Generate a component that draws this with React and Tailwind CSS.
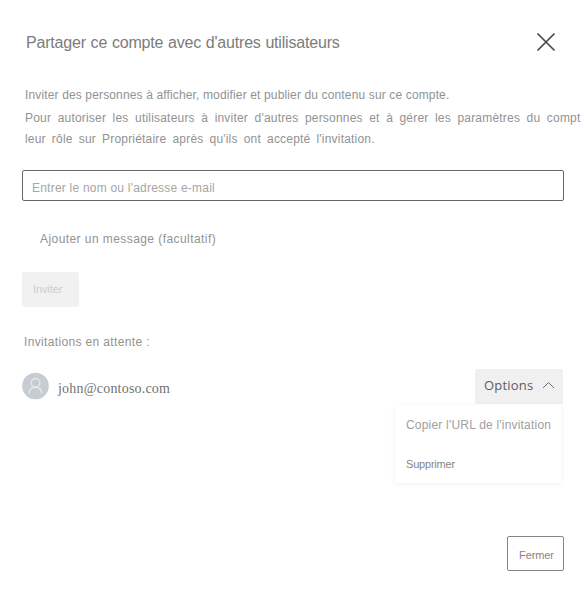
import React from "react";

function CloseIcon() {
  return (
    <svg width="20" height="20" viewBox="0 0 20 20" fill="none" stroke="#484848" strokeWidth="1.7">
      <path d="M1.5 1.5 18.5 18.5M18.5 1.5 1.5 18.5" />
    </svg>
  );
}

function Avatar() {
  return (
    <svg width="28" height="28" viewBox="0 0 28 28" fill="none">
      <circle cx="13.5" cy="14" r="13.3" fill="#c6ccd1" />
      <g stroke="#e2e7ea" strokeWidth="1.5" strokeLinecap="round">
        <circle cx="13.5" cy="10.8" r="4.3" />
        <path d="M7.300 20.800c.4-3.600 2.800-5.500 6.200-5.500s5.800 1.900 6.200 5.500" />
      </g>
    </svg>
  );
}

function OptionsMenu() {
  return (
    <div className="relative">
      <button className="flex h-[35px] w-[88px] items-center rounded-t-[2px] bg-[#f0f0f0] pl-[9px] font-['Open_Sans',sans-serif] text-[13px] tracking-[0.2px] text-[#5c5c5c]">
        <span className="mt-[-3px] w-[58px] text-left leading-4 whitespace-nowrap">Options</span>
        <svg className="mt-[-4px]" width="13" height="8" viewBox="0 0 13 8" fill="none" stroke="#707070" strokeWidth="1">
          <path d="M1 7 6.500 1.500 12 7" />
        </svg>
      </button>
      <div className="absolute top-[36px] right-[2px] flex h-[78px] w-[166px] flex-col bg-white pt-[12px] pl-[11px] shadow-[0_1px_6px_rgba(0,0,0,0.06)]">
        <span className="text-[12px] leading-4 tracking-[0.2px] whitespace-nowrap text-[#a0a0a0]">Copier l'URL de l'invitation</span>
        <span className="mt-[23px] text-[11px] leading-4 tracking-[-0.2px] whitespace-nowrap text-[#858585]">Supprimer</span>
      </div>
    </div>
  );
}

export default function App() {
  return (
    <main className="flex h-[594px] w-[582px] flex-col overflow-hidden bg-white font-['Liberation_Sans',Arial,sans-serif] text-[12px] text-[#929292]">
      <header className="flex h-[64px] items-start justify-between pt-[32px] pr-[26px] pl-[26px]">
        <h1 className="pt-px text-[16px] leading-5 tracking-[-0.19px] [word-spacing:0.5px] whitespace-nowrap text-[#7c7c7c]">Partager ce compte avec d'autres utilisateurs</h1>
        <button aria-label="Fermer"><CloseIcon /></button>
      </header>
      <section className="mt-[23px] pl-[25px] whitespace-nowrap">
        <p className="h-[23px] leading-4 tracking-[0.14px]">Inviter des personnes à afficher, modifier et publier du contenu sur ce compte.</p>
        <p className="h-[21px] leading-4 tracking-[0.2px] [word-spacing:2.95px]">Pour autoriser les utilisateurs à inviter d'autres personnes et à gérer les paramètres du compt</p>
        <p className="h-[16px] leading-4 tracking-[0.2px] [word-spacing:2.5px]">leur rôle sur Propriétaire après qu'ils ont accepté l'invitation.</p>
      </section>
      <div className="mt-[23px] ml-[22px] flex h-[31px] w-[542px] items-center rounded-[2px] border border-[#666] pt-[5px] pl-[9px] leading-4 tracking-[0.22px] text-[#a5a5a5]">
        Entrer le nom ou l'adresse e-mail
      </div>
      <p className="mt-[30px] ml-[40px] h-4 leading-4 tracking-[0.43px]">Ajouter un message (facultatif)</p>
      <button className="mt-[25px] ml-[22px] h-[35px] w-[57px] rounded-[2px] bg-[#f1f1f1] pl-[11px] text-left text-[11px] tracking-[-0.1px] text-[#cdcdcd]">Inviter</button>
      <p className="mt-[27px] ml-[24px] h-4 leading-4 tracking-[0.35px]">Invitations en attente :</p>
      <div className="mt-[19px] flex h-[35px] items-start justify-between pr-[19px] pl-[22px]">
        <div className="flex items-center gap-[8px] pt-[3px]">
          <Avatar />
          <span className="pt-[6px] font-['Liberation_Serif',serif] text-[14px] leading-5 tracking-[0.2px] text-[#727272]">john@contoso.com</span>
        </div>
        <OptionsMenu />
      </div>
      <footer className="mt-[132px] flex justify-end pr-[18px]">
        <button className="h-[35px] w-[57px] rounded-[2px] border border-[#858585] pt-[3px] pl-[2px] text-[11px] tracking-[-0.1px] text-[#858585]">Fermer</button>
      </footer>
    </main>
  );
}
